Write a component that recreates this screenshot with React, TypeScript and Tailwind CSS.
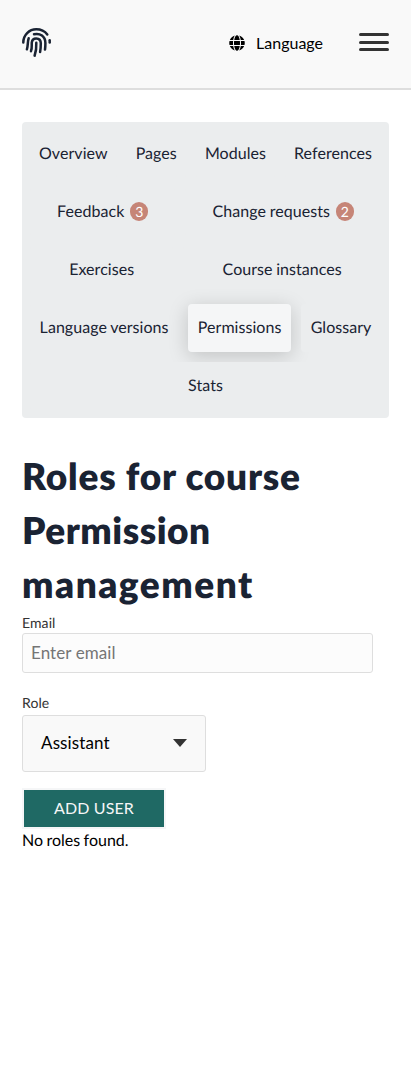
import { FaGlobe } from "react-icons/fa";

type Tab = { label: string; count?: number; active?: boolean };

const rows: Tab[][] = [
  [{ label: "Overview" }, { label: "Pages" }, { label: "Modules" }, { label: "References" }],
  [
    { label: "Feedback", count: 3 },
    { label: "Change requests", count: 2 },
  ],
  [{ label: "Exercises" }, { label: "Course instances" }],
  [{ label: "Language versions" }, { label: "Permissions", active: true }, { label: "Glossary" }],
  [{ label: "Stats" }],
];

function Logo() {
  return (
    <svg
      width="30"
      height="30"
      viewBox="0 0 30 30"
      fill="none"
      stroke="#1a2333"
      strokeWidth="2.5"
      strokeLinecap="round"
      aria-label="Home"
    >
      <path d="M1.300 14.500C1.300 7 7.200 1.300 14.300 1.300c4.800 0 8.600 2 11 5.100" />
      <path d="M27.700 12.200v2.400" />
      <path d="M6.700 10.200C5.400 13.600 6.200 17.500 4.900 21.300" />
      <path d="M12 6.300c6-1.600 11.400 2.200 11.400 8.700 0 2.300-.1 4.400-.4 6.600" />
      <path d="M9 23.200c1.300-3.700.5-5.700.8-8.800.3-2.400 2-4 4.400-4 2.700 0 4.600 1.900 4.600 4.900 0 3.100-.1 5.700-.7 8.800" />
      <path d="M14.300 14.800c.2 4.600-.1 8.600-1.700 12.900" />
    </svg>
  );
}

function TabLink({ label, count, active }: Tab) {
  return (
    <a
      href="#"
      className={
        "flex h-12 grow items-center justify-center rounded px-[9px] leading-none whitespace-nowrap " +
        (active ? "bg-[#f5f6f7] shadow-[0_4px_20px_rgba(0,0,0,0.18)]" : "bg-[#ebedee]")
      }
    >
      <span className="tracking-[0.05px] [word-spacing:-0.5px]">{label}</span>
      {count !== undefined && (
        <span className="mb-px ml-[6px] flex h-[19px] w-[18px] items-center justify-center rounded-full bg-[#c68577] text-[14px] text-white">
          {count}
        </span>
      )}
    </a>
  );
}

export default function App() {
  return (
    <div className="min-h-[1080px] bg-white font-['Lato',sans-serif] text-[16px] text-black antialiased [text-rendering:geometricPrecision]">
      <header className="flex h-[90px] items-center border-b-2 border-[#dedede] bg-[#f9f9f9] px-[22px] pb-[3px]">
        <Logo />
        <button className="ml-auto flex items-center gap-[11px]">
          <FaGlobe size={16} />
          <span className="leading-6">Language</span>
        </button>
        <button className="ml-[36px] flex w-[30px] flex-col gap-[4.500px] pb-[1px]" aria-label="Menu">
          <span className="h-[3px] rounded-full bg-[#333]" />
          <span className="h-[3px] rounded-full bg-[#333]" />
          <span className="h-[3px] rounded-full bg-[#333]" />
        </button>
      </header>
      <main className="px-[22px] pt-8">
        <nav className="flex flex-col gap-[10px] rounded bg-[#ebedee] p-2 text-[#1a2333]">
          {rows.map((row) => (
            <div key={row[0].label} className="flex gap-[10px]">
              {row.map((tab) => (
                <TabLink key={tab.label} {...tab} />
              ))}
            </div>
          ))}
        </nav>
        <h1 className="mt-[31px] mb-px text-[37px] leading-[54px] font-extrabold whitespace-nowrap text-[#1a2333]">
          <span className="block tracking-[0.77px]">Roles for course</span>
          <span className="block tracking-[0.5px]">Permission</span>
          <span className="block tracking-[1.5px]">management</span>
        </h1>
        <form className="flex flex-col items-start">
          <label htmlFor="email" className="mt-[1px] h-5 text-[14px] leading-5 tracking-[0.1px] text-[#333]">
            Email
          </label>
          <input
            id="email"
            placeholder="Enter email"
            className="h-10 w-[351px] rounded-[3px] border border-[#dedede] bg-[#fcfcfc] px-2 pb-[2px] text-[17px] tracking-[0.08px] placeholder:text-[#757575]"
          />
          <label htmlFor="role" className="mt-5 h-[22px] text-[14px] leading-5 tracking-[0.1px] text-[#333]">
            Role
          </label>
          <button
            id="role"
            type="button"
            className="flex h-[57px] w-[184px] items-center justify-between rounded-[3px] border border-[#dedede] bg-[#f9f9f9] px-[18px] pb-[2px] text-[17px] tracking-[0.12px]"
          >
            Assistant
            <svg width="14" height="8" viewBox="0 0 14 8" fill="#333">
              <path d="M0 0h14L7 8z" />
            </svg>
          </button>
          <button
            type="button"
            className="mt-4 h-[41px] w-[144px] border-2 border-[#f5f6f7] bg-[#1f6964] pb-[2px] text-[16px] tracking-[0.1px] text-[#f5f6f7]"
          >
            ADD USER
          </button>
        </form>
        <p className="leading-6 [word-spacing:-0.7px]">No roles found.</p>
      </main>
    </div>
  );
}
